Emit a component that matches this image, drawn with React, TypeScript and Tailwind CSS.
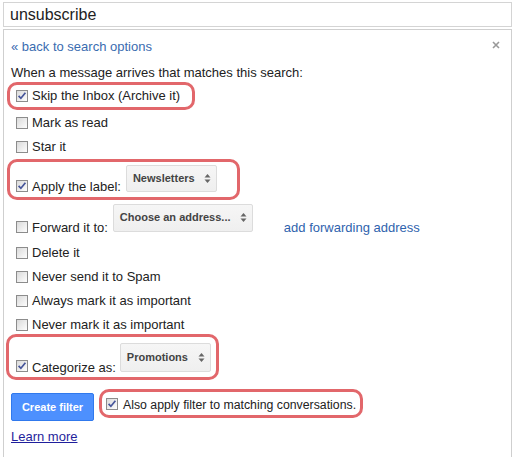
import React from "react";

function Box({ checked }: { checked?: boolean }) {
  return (
    <svg width="12" height="12" viewBox="0 0 12 12" className="shrink-0">
      <defs>
        <linearGradient id="cb-fill" x1="0" y1="0" x2="1" y2="1">
          <stop offset="0" stopColor="#d8d8d8" />
          <stop offset="1" stopColor="#ffffff" />
        </linearGradient>
      </defs>
      <rect x="0.5" y="0.5" width="11" height="11" fill="url(#cb-fill)" stroke="#8c8c8c" />
      {checked && (
        <path d="M2.6 5.8 L4.9 8.3 L9.4 2.8" fill="none" stroke="#46559a" strokeWidth="1.7" />
      )}
    </svg>
  );
}

function Arrows() {
  return (
    <svg width="7" height="11" viewBox="0 0 7 11" className="shrink-0">
      <path d="M0.5 4.5 L3.5 1 L6.5 4.5 Z" fill="#666" />
      <path d="M0.5 6.5 L3.5 10 L6.5 6.5 Z" fill="#666" />
    </svg>
  );
}

function Select({ label, className }: { label: string; className: string }) {
  return (
    <div
      className={
        "flex shrink-0 items-center justify-between rounded-[2px] border border-[#dcdcdc] bg-gradient-to-b from-[#f6f6f6] to-[#efefef] pl-[6px] pr-[5px] pb-[1px] text-[11px] leading-none font-bold whitespace-nowrap text-[#444] " +
        className
      }
    >
      <span>{label}</span>
      <Arrows />
    </div>
  );
}

function Row({ label, checked }: { label: string; checked?: boolean }) {
  return (
    <div className="ml-[5px] flex h-[24px] items-center gap-[4px]">
      <Box checked={checked} />
      <span>{label}</span>
    </div>
  );
}

export default function App() {
  return (
    <div className="h-[457px] w-[513px] overflow-hidden bg-white font-['Liberation_Sans',Arial,sans-serif] text-[13px] text-[#222]">
      <div className="mt-[2px] mr-[1px] ml-[3px] flex h-[25px] items-center border border-[#d4d4d4] pl-[6px] text-[16px] text-[#222]">
        unsubscribe
      </div>
      <div className="relative mt-[2px] mr-[1px] ml-[3px] h-[440px] border border-[#cfcfcf] pl-[7px]">
        <svg width="8" height="8" viewBox="0 0 8 8" className="absolute top-[11px] right-[11px]">
          <path d="M1 1 L7 7 M7 1 L1 7" stroke="#999" strokeWidth="1.6" />
        </svg>

        <div className="mt-[8px] h-[18px] leading-[18px] text-[#3a6cb0]">« back to search options</div>
        <div className="mt-[8px] h-[18px] leading-[18px]">When a message arrives that matches this search:</div>

        <div className="-ml-[4px] flex h-[28px] w-[188px] items-center gap-[4px] rounded-[10px] border-[3px] border-[#e2676b] pl-[6px]">
          <Box checked />
          <span>Skip the Inbox (Archive it)</span>
        </div>

        <div className="mt-[1px]">
          <Row label="Mark as read" />
          <Row label="Star it" />
        </div>

        <div className="-ml-[4px] flex h-[41px] w-[233px] items-end rounded-[10px] border-[3px] border-[#e2676b] pt-[3px] pb-[4px] pl-[6px]">
          <div className="flex items-end gap-[4px] leading-[13px]">
            <span className="mb-[1px]">
              <Box checked />
            </span>
            <span>Apply the label:</span>
          </div>
          <Select label="Newsletters" className="mb-[1px] ml-[5px] h-[27px] w-[91px]" />
        </div>

        <div className="mt-[4px] ml-[5px] flex h-[30px] items-end">
          <div className="flex items-end gap-[4px] leading-[13px]">
            <span className="mb-[1px]">
              <Box />
            </span>
            <span>Forward it to:</span>
          </div>
          <Select label="Choose an address..." className="mb-[2px] ml-[5px] h-[28px] w-[140px]" />
          <span className="ml-[31px] leading-[13px] text-[#2f63ad]">add forwarding address</span>
        </div>

        <div className="mt-[7px]">
          <Row label="Delete it" />
          <Row label="Never send it to Spam" />
          <Row label="Always mark it as important" />
          <Row label="Never mark it as important" />
        </div>

        <div className="-mt-[3px] -ml-[5px] flex h-[46px] w-[213px] items-end rounded-[10px] border-[3px] border-[#e2676b] pb-[3px] pl-[7px]">
          <div className="flex items-end gap-[4px] leading-[13px]">
            <span className="mb-[2px]">
              <Box checked />
            </span>
            <span>Categorize as:</span>
          </div>
          <Select label="Promotions" className="mb-[2px] ml-[4px] h-[29px] w-[91px]" />
        </div>

        <div className="mt-[9px] flex items-start gap-[5px]">
          <button className="mt-[4px] h-[28px] w-[83px] shrink-0 rounded-[2px] border border-[#3079ed] bg-[#4d90fe] text-[11px] font-bold text-white">
            Create filter
          </button>
          <div className="flex h-[29px] w-[264px] shrink-0 items-end gap-[5px] rounded-[10px] border-[3px] border-[#e2676b] pb-[3px] pl-[4px] text-[12.3px] leading-[13px] whitespace-nowrap">
            <span className="mb-[2px]">
              <Box checked />
            </span>
            <span>Also apply filter to matching conversations.</span>
          </div>
        </div>

        <div className="mt-[8px] h-[16px] leading-[16px] text-[#1f1f9c] underline">Learn more</div>
      </div>
    </div>
  );
}
